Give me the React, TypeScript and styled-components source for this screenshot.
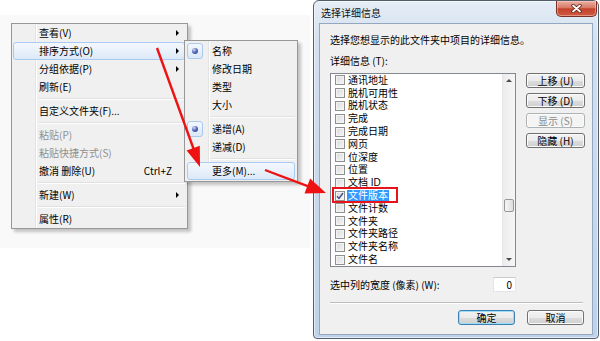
import React from 'react';
import styled, { createGlobalStyle, css } from 'styled-components';

interface MenuEntry {
  label?: string;
  arrow?: boolean;
  shortcut?: string;
  disabled?: boolean;
  active?: boolean;
  checked?: boolean;
  separator?: boolean;
}

const mainMenu: MenuEntry[] = [
  { label: '查看(V)', arrow: true },
  { label: '排序方式(O)', arrow: true, active: true },
  { label: '分组依据(P)', arrow: true },
  { label: '刷新(E)' },
  { separator: true },
  { label: '自定义文件夹(F)...' },
  { separator: true },
  { label: '粘贴(P)', disabled: true },
  { label: '粘贴快捷方式(S)', disabled: true },
  { label: '撤消 删除(U)', shortcut: 'Ctrl+Z' },
  { separator: true },
  { label: '新建(W)', arrow: true },
  { separator: true },
  { label: '属性(R)' },
];

const sortMenu: MenuEntry[] = [
  { label: '名称', checked: true },
  { label: '修改日期' },
  { label: '类型' },
  { label: '大小' },
  { separator: true },
  { label: '递增(A)', checked: true },
  { label: '递减(D)' },
  { separator: true },
  { label: '更多(M)...', active: true },
];

const details = [
  '通讯地址',
  '脱机可用性',
  '脱机状态',
  '完成',
  '完成日期',
  '网页',
  '位深度',
  '位置',
  '文档 ID',
  '文件版本',
  '文件计数',
  '文件夹',
  '文件夹路径',
  '文件夹名称',
  '文件名',
];

const SELECTED = '文件版本';

const App = () => {
  const renderMenu = (entries: MenuEntry[], itemInset: number, slot: number) =>
    entries.map((e, i) =>
      e.separator ? (
        <MenuSeparator key={i} />
      ) : (
        <MenuItem key={i} $active={e.active} $disabled={e.disabled} $inset={itemInset}>
          <Slot $w={slot}>
            {e.checked && (
              <RadioMark>
                <Bullet />
              </RadioMark>
            )}
          </Slot>
          <ItemLabel>{e.label}</ItemLabel>
          {e.shortcut && <Shortcut>{e.shortcut}</Shortcut>}
          {e.arrow && <SubArrow />}
        </MenuItem>
      ),
    );

  return (
    <>
      <GlobalStyle />
      <Page>
        <LeftPane>
          <Backdrop>
            <ContextMenu>{renderMenu(mainMenu, 1, 25)}</ContextMenu>
            <SubMenu>{renderMenu(sortMenu, 2, 24)}</SubMenu>
          </Backdrop>
        </LeftPane>

        <Dialog>
          <TitleBar>
            <Title>选择详细信息</Title>
            <CloseButton>
              <svg width="11" height="9" viewBox="0 0 11 9">
                <path d="M2 1.5 L9 7.5 M9 1.5 L2 7.5" stroke="#5b1d14" strokeWidth="3.4" strokeLinecap="round" />
                <path d="M2 1.5 L9 7.5 M9 1.5 L2 7.5" stroke="#ffffff" strokeWidth="1.8" strokeLinecap="round" />
              </svg>
            </CloseButton>
          </TitleBar>

          <Client>
            <Intro>选择您想显示的此文件夹中项目的详细信息。</Intro>
            <FieldLabel>详细信息 (T):</FieldLabel>

            <TopRow>
              <ListBox>
                <Rows>
                  {details.map((d) => (
                    <Row key={d}>
                      <CheckBox>
                        {d === SELECTED && (
                          <svg width="8" height="8" viewBox="0 0 8 8">
                            <path d="M1 4.2 L3 6.4 L7 1" stroke="#3d4f8a" strokeWidth="1.4" fill="none" />
                          </svg>
                        )}
                      </CheckBox>
                      <RowText $selected={d === SELECTED}>{d}</RowText>
                      {d === SELECTED && <Callout />}
                    </Row>
                  ))}
                </Rows>
                <ScrollBar>
                  <ScrollButton>
                    <ScrollGlyph $up />
                  </ScrollButton>
                  <Thumb />
                  <ScrollButton $bottom>
                    <ScrollGlyph />
                  </ScrollButton>
                </ScrollBar>
              </ListBox>

              <SideButtons>
                <WinButton>上移 (U)</WinButton>
                <WinButton>下移 (D)</WinButton>
                <WinButton $disabled>显示 (S)</WinButton>
                <WinButton>隐藏 (H)</WinButton>
              </SideButtons>
            </TopRow>

            <WidthRow>
              <span>选中列的宽度 (像素) (W):</span>
              <NumberBox>0</NumberBox>
            </WidthRow>

            <Etched />

            <ActionRow>
              <WinButton $wide $default>确定</WinButton>
              <WinButton $wide>取消</WinButton>
            </ActionRow>
          </Client>
        </Dialog>

        {/* annotation arrows drawn over the screenshot */}
        <Overlay width="600" height="341" viewBox="0 0 600 341">
          <line x1="157" y1="48" x2="194" y2="150" stroke="#ee1212" strokeWidth="2.4" />
          <polygon points="200,167 186.6,150.6 199.8,145.8" fill="#ee1212" />
          <line x1="265" y1="170" x2="309" y2="186.6" stroke="#ee1212" strokeWidth="2.4" />
          <polygon points="326,193 304.5,193.4 310.1,178.4" fill="#ee1212" />
        </Overlay>
      </Page>
    </>
  );
};

const GlobalStyle = createGlobalStyle`
  html, body {
    margin: 0;
    padding: 0;
    background: #ffffff;
  }
  body {
    font-family: 'Noto Sans CJK SC', 'Noto Sans', sans-serif;
    font-size: 10px;
    color: #000;
  }
  #root {
    width: 600px;
    height: 341px;
    overflow: hidden;
  }
`;

const Page = styled.div`
  position: relative;
  width: 600px;
  height: 341px;
  display: flex;
`;

const LeftPane = styled.div`
  width: 313px;
  flex: none;
  padding-top: 15px;
`;

const Backdrop = styled.div`
  position: relative;
  width: 310px;
  height: 233px;
  box-sizing: border-box;
  padding: 8px 0 0 11px;
  background: #f9f9f9;
`;

const menuPanel = css`
  position: relative;
  box-sizing: border-box;
  background: #f0f0f0;
  border: 1px solid #979797;
  box-shadow: 3px 3px 3px rgba(0, 0, 0, 0.22);

  &::before,
  &::after {
    content: '';
    position: absolute;
    top: 0;
    bottom: 0;
    width: 1px;
  }
  &::before {
    left: 23px;
    background: #e2e3e3;
  }
  &::after {
    left: 24px;
    background: #ffffff;
  }
`;

const ContextMenu = styled.div`
  ${menuPanel};
  width: 177px;
`;

const SubMenu = styled.div`
  ${menuPanel};
  position: absolute;
  left: 184px;
  top: 25px;
  width: 114px;
  padding: 1px 0;
  z-index: 2;
`;

const MenuItem = styled.div<{ $active?: boolean; $disabled?: boolean; $inset: number }>`
  position: relative;
  z-index: 1;
  height: 18px;
  box-sizing: border-box;
  margin: 0 2px 0 ${(p) => p.$inset}px;
  padding-right: 5px;
  display: flex;
  align-items: center;
  border: 1px solid transparent;
  border-radius: 3px;
  line-height: 14px;
  white-space: nowrap;
  color: ${(p) => (p.$disabled ? '#8f8f8f' : '#000')};
  ${(p) =>
    p.$active &&
    css`
      background: linear-gradient(#f4f8fd, #dde9f8);
      border-color: #aacbf1;
    `}
`;

const Slot = styled.span<{ $w: number }>`
  width: ${(p) => p.$w}px;
  height: 16px;
  flex: none;
  display: flex;
  align-items: center;
`;

const RadioMark = styled.span`
  width: 16px;
  height: 16px;
  margin-left: -1px;
  box-sizing: border-box;
  border: 1px solid #a9c9ee;
  border-radius: 3px;
  background: linear-gradient(#f3f8fe, #dbe8f8);
  display: flex;
  align-items: center;
  justify-content: center;
`;

const Bullet = styled.span`
  width: 6px;
  height: 6px;
  border-radius: 50%;
  background: radial-gradient(circle at 35% 30%, #d6ddf6 0, #5b6fc0 45%, #1d2b6c 100%);
`;

const ItemLabel = styled.span`
  flex: 1;
`;

const Shortcut = styled.span`
  margin-right: 7px;
`;

const SubArrow = styled.span`
  width: 0;
  height: 0;
  border-left: 3px solid #000;
  border-top: 3px solid transparent;
  border-bottom: 3px solid transparent;
`;

const MenuSeparator = styled.div`
  position: relative;
  z-index: 1;
  height: 6px;
  margin: 0 2px 0 26px;
  display: flex;
  flex-direction: column;
  justify-content: center;

  &::before {
    content: '';
    height: 1px;
    background: #e0e0e0;
  }
  &::after {
    content: '';
    height: 1px;
    background: #ffffff;
  }
`;

const Dialog = styled.div`
  width: 286px;
  height: 339px;
  flex: none;
  box-sizing: border-box;
  border: 1px solid #535e6b;
  border-radius: 6px 6px 4px 4px;
  background: linear-gradient(#e5edf6, #d3e0f0 40px, #bed2ea);
  box-shadow: inset 0 0 0 1px rgba(255, 255, 255, 0.55);
  display: flex;
  flex-direction: column;
`;

const TitleBar = styled.div`
  height: 22px;
  flex: none;
  display: flex;
  justify-content: space-between;
  align-items: flex-start;
  padding: 0 1px 0 7px;
`;

const Title = styled.span`
  line-height: 24px;
  color: #111;
`;

const CloseButton = styled.div`
  width: 41px;
  height: 16px;
  box-sizing: border-box;
  border: 1px solid #7a3226;
  border-top: none;
  border-radius: 0 0 5px 5px;
  background: linear-gradient(#eab0a4, #d87965 45%, #c3432d 52%, #cf5a3e 100%);
  box-shadow: inset 0 0 0 1px rgba(255, 220, 210, 0.45);
  display: flex;
  align-items: center;
  justify-content: center;
`;

const Client = styled.div`
  flex: 1;
  margin: 0 5px 3px;
  box-sizing: border-box;
  border: 1px solid #93a7bf;
  background: #f0f0f0;
  padding: 9px 7px 0 10px;
  display: flex;
  flex-direction: column;
  line-height: 14px;
`;

const Intro = styled.div`
  height: 14px;
  white-space: nowrap;
`;

const FieldLabel = styled.div`
  margin-top: 7px;
  height: 14px;
`;

const TopRow = styled.div`
  margin-top: 5px;
  display: flex;
  gap: 10px;
`;

const ListBox = styled.div`
  width: 186px;
  height: 194px;
  box-sizing: border-box;
  border: 1px solid #828790;
  background: #ffffff;
  display: flex;
`;

const Rows = styled.div`
  flex: 1;
  font-family: 'Liberation Sans', 'Noto Sans CJK SC', sans-serif;
`;

const Row = styled.div`
  position: relative;
  height: 12.8px;
  padding-left: 4px;
  display: flex;
  align-items: center;
  white-space: nowrap;
  line-height: 11px;
`;

const CheckBox = styled.span`
  width: 10px;
  height: 10px;
  flex: none;
  box-sizing: border-box;
  border: 1px solid #8e8f8f;
  background: linear-gradient(135deg, #d9d9d9, #f7f7f7);
  box-shadow: inset 0 0 0 1px #f4f4f4;
  margin-right: 2px;
  display: flex;
  align-items: center;
  justify-content: center;
`;

const RowText = styled.span<{ $selected?: boolean }>`
  display: inline-block;
  height: 11px;
  padding: 0 1px;
  line-height: 11px;
  ${(p) =>
    p.$selected &&
    css`
      background: #3399ff;
      color: #ffffff;
    `}
`;

const Callout = styled.span`
  position: absolute;
  left: 1px;
  top: -2px;
  width: 66px;
  height: 16px;
  box-sizing: border-box;
  border: 2px solid #e8141c;
`;

const ScrollBar = styled.div`
  width: 13px;
  flex: none;
  box-sizing: border-box;
  border-left: 1px solid #e6e6e6;
  background: linear-gradient(to right, #ececec, #f6f6f6);
  display: flex;
  flex-direction: column;
`;

const ScrollButton = styled.div<{ $bottom?: boolean }>`
  height: 13px;
  display: flex;
  align-items: center;
  justify-content: center;
  ${(p) => p.$bottom && 'margin-top: auto;'}
`;

const ScrollGlyph = styled.span<{ $up?: boolean }>`
  width: 0;
  height: 0;
  border-left: 3px solid transparent;
  border-right: 3px solid transparent;
  ${(p) => (p.$up ? 'border-bottom: 3px solid #4a4a4a;' : 'border-top: 3px solid #4a4a4a;')}
`;

const Thumb = styled.div`
  margin: 112px 0 0 1px;
  width: 10px;
  height: 13px;
  box-sizing: border-box;
  border: 1px solid #979797;
  border-radius: 2px;
  background: linear-gradient(to right, #f6f6f6, #dedede);
`;

const SideButtons = styled.div`
  width: 59px;
  display: flex;
  flex-direction: column;
  gap: 5px;
`;

const WinButton = styled.div<{ $disabled?: boolean; $wide?: boolean; $default?: boolean }>`
  width: ${(p) => (p.$wide ? 57 : 59)}px;
  height: 15px;
  box-sizing: border-box;
  border: 1px solid #707070;
  border-radius: 3px;
  background: linear-gradient(#f2f2f2 0%, #ebebeb 50%, #dddddd 51%, #cfcfcf 100%);
  box-shadow: inset 0 0 0 1px #fbfbfb;
  text-align: center;
  line-height: 13px;
  white-space: nowrap;
  ${(p) =>
    p.$disabled &&
    css`
      border-color: #adb2b5;
      background: #f4f4f4;
      color: #8a8a8a;
    `}
  ${(p) =>
    p.$default &&
    css`
      border-color: #3c7fb1;
      box-shadow: inset 0 0 0 1px #9ddcf8;
    `}
`;

const WidthRow = styled.div`
  margin-top: 10px;
  width: 186px;
  height: 15px;
  display: flex;
  align-items: center;
  justify-content: space-between;
  white-space: nowrap;
`;

const NumberBox = styled.div`
  width: 23px;
  height: 15px;
  box-sizing: border-box;
  border: 1px solid #e2e6ea;
  border-top-color: #c9ccd1;
  background: #ffffff;
  text-align: right;
  padding-right: 3px;
  line-height: 13px;
`;

const Etched = styled.div`
  margin-top: 10px;
  width: 253px;
  height: 1px;
  background: #bdbdbd;
  border-bottom: 1px solid #ffffff;
`;

const ActionRow = styled.div`
  margin-top: 6px;
  padding-right: 1px;
  display: flex;
  justify-content: flex-end;
  gap: 12px;
`;

const Overlay = styled.svg`
  position: absolute;
  left: 0;
  top: 0;
  pointer-events: none;
  z-index: 10;
`;

export default App;
